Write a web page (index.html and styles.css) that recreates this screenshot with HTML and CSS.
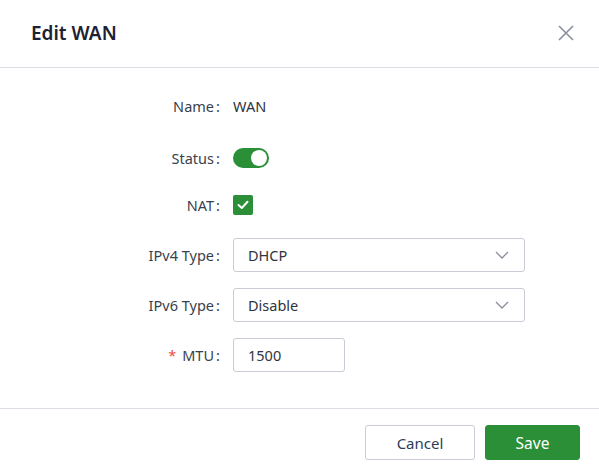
FILE: index.html
```html
<!DOCTYPE html>
<html>
<head>
<meta charset="utf-8">
<link rel="stylesheet" href="styles.css">
</head>
<body>
<div class="dialog">
  <div class="header">
    <div class="title">Edit WAN</div>
    <svg class="close" width="16" height="16" viewBox="0 0 16 16"><path d="M1 1L15 15M15 1L1 15" stroke="#8a8e9c" stroke-width="1.6" fill="none"/></svg>
  </div>
  <div class="form">
    <div class="row">
      <div class="label">Name<span class="colon">:</span></div>
      <div class="value text">WAN</div>
    </div>
    <div class="row row-status">
      <div class="label">Status<span class="colon">:</span></div>
      <div class="value"><span class="switch"><span class="knob"></span></span></div>
    </div>
    <div class="row">
      <div class="label">NAT<span class="colon">:</span></div>
      <div class="value"><span class="check"><svg width="12" height="10" viewBox="0 0 12 10"><path d="M1.5 5L4.8 8L10.5 1.8" stroke="#fff" stroke-width="2" fill="none" stroke-linecap="round" stroke-linejoin="round"/></svg></span></div>
    </div>
    <div class="row">
      <div class="label">IPv4 Type<span class="colon">:</span></div>
      <div class="value"><div class="select"><span>DHCP</span><svg width="14" height="8" viewBox="0 0 14 8"><path d="M1 1L7 7L13 1" stroke="#8a8e9c" stroke-width="1.3" fill="none"/></svg></div></div>
    </div>
    <div class="row">
      <div class="label">IPv6 Type<span class="colon">:</span></div>
      <div class="value"><div class="select"><span>Disable</span><svg width="14" height="8" viewBox="0 0 14 8"><path d="M1 1L7 7L13 1" stroke="#8a8e9c" stroke-width="1.3" fill="none"/></svg></div></div>
    </div>
    <div class="row">
      <div class="label"><span class="req">*</span>MTU<span class="colon">:</span></div>
      <div class="value"><div class="input">1500</div></div>
    </div>
  </div>
  <div class="footer">
    <button class="btn cancel">Cancel</button>
    <button class="btn save">Save</button>
  </div>
</div>
</body>
</html>
```
FILE: styles.css
```css
* { box-sizing: border-box; }
html, body { margin: 0; padding: 0; background: #fff; }
body {
  font-family: "Noto Sans", "Noto Sans CJK SC", sans-serif;
  font-size: 14.5px;
  color: #333844;
  width: 599px;
  height: 475px;
  overflow: hidden;
}
.header {
  height: 68px;
  border-bottom: 1px solid #dcdce4;
  display: flex;
  align-items: center;
  justify-content: space-between;
  padding: 0 25px 0 31px;
}
.title {
  font-size: 19px;
  font-weight: 600;
  color: #1c2233;
  margin-top: -1px;
}
.close { margin-top: -1px; }
.form {
  padding: 21px 0 36px 0;
}
.row {
  display: flex;
  align-items: center;
  height: 34px;
  margin-bottom: 16px;
}
.row:last-child { margin-bottom: 0; }
.row-status { margin-top: 18px; margin-bottom: 13px; }
.label {
  width: 230px;
  text-align: right;
  color: #3a3f4c;
  white-space: nowrap;
  flex: none;
}
.colon {
  display: inline-block;
  width: 16px;
  padding-left: 2px;
  text-align: left;
}
.req { color: #f04848; margin-right: 6px; }
.value {
  margin-left: 3px;
  display: flex;
  align-items: center;
}
.text { color: #2f3441; }
.switch {
  width: 36px;
  height: 20px;
  border-radius: 10px;
  background: #2a8f36;
  position: relative;
  display: inline-block;
}
.knob {
  position: absolute;
  right: 2px;
  top: 2px;
  width: 16px;
  height: 16px;
  border-radius: 50%;
  background: #fff;
}
.check {
  width: 20px;
  height: 20px;
  border-radius: 2px;
  background: #2a8f36;
  display: flex;
  align-items: center;
  justify-content: center;
}
.select {
  width: 292px;
  height: 34px;
  border: 1px solid #c9ccd6;
  border-radius: 3px;
  display: flex;
  align-items: center;
  justify-content: space-between;
  padding: 0 15px 0 14px;
  color: #2f3441;
}
.input {
  width: 112px;
  height: 34px;
  border: 1px solid #c9ccd6;
  border-radius: 3px;
  display: flex;
  align-items: center;
  padding: 0 14px;
  color: #2f3441;
}
.footer {
  border-top: 1px solid #dcdce4;
  display: flex;
  justify-content: flex-end;
  gap: 10px;
  padding: 16px 19px 0 0;
}
.btn {
  height: 35px;
  font-family: inherit;
  font-size: 15px;
  border-radius: 3px;
  cursor: pointer;
}
.cancel {
  width: 110px;
  background: #fff;
  border: 1px solid #c9ccd6;
  color: #2d3c5c;
}
.save {
  width: 95px;
  background: #2a8f36;
  border: 1px solid #2a8f36;
  color: #fff;
  font-size: 15.5px;
}
```
